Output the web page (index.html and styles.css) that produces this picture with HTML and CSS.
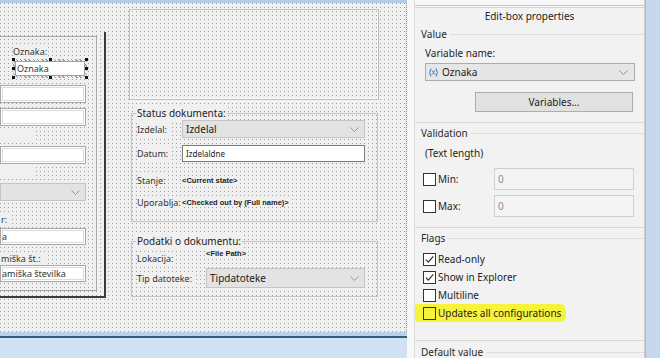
FILE: index.html
```html
<!DOCTYPE html>
<html lang="sl">
<head>
<meta charset="utf-8">
<title>Edit-box properties</title>
<link rel="stylesheet" href="styles.css">
</head>
<body>
<div class="app">
  <main class="designer">
    <div class="topbar"></div>
    <div class="canvas">
      <div class="form-frame">
        <div class="form-inner">
          <div class="lbl lbl-oznaka">Oznaka:</div>
          <div class="sel">
            <div class="tb-sel">Oznaka</div>
            <span class="h h1"></span><span class="h h2"></span><span class="h h3"></span>
            <span class="h h4"></span><span class="h h5"></span>
            <span class="h h6"></span><span class="h h7"></span><span class="h h8"></span>
          </div>
          <div class="tb tb1"></div>
          <div class="tb tb2"></div>
          <div class="ghost g1"></div>
          <div class="tb tb3"></div>
          <div class="ghost g2"></div>
          <div class="cb cb-left"><span></span><svg class="chev" width="9" height="5" viewBox="0 0 9 5"><path d="M0.5 0.5 L4.5 4.5 L8.5 0.5" fill="none" stroke="#9a9a9a" stroke-width="1"/></svg></div>
          <div class="lbl lbl-r">r:</div>
          <div class="tb tb4"><span class="tb-txt">a</span></div>
          <div class="lbl lbl-km">miška št.:</div>
          <div class="tb tb5"><span class="tb-txt">amiška številka</span></div>
        </div>
      </div>

      <div class="box-top"></div>

      <fieldset class="group status">
        <legend>Status dokumenta:</legend>
        <div class="frow r1">
          <span class="glbl">Izdelal:</span>
          <div class="cb"><span>Izdelal</span><svg class="chev" width="9" height="5" viewBox="0 0 9 5"><path d="M0.5 0.5 L4.5 4.5 L8.5 0.5" fill="none" stroke="#9a9a9a" stroke-width="1"/></svg></div>
        </div>
        <div class="frow r2">
          <span class="glbl">Datum:</span>
          <div class="tb-dark">Izdelaldne</div>
        </div>
        <div class="frow r3">
          <span class="glbl">Stanje:</span>
          <span class="ph">&lt;Current state&gt;</span>
        </div>
        <div class="frow r4">
          <span class="glbl">Uporablja:</span>
          <span class="ph">&lt;Checked out by (Full name)&gt;</span>
        </div>
      </fieldset>

      <fieldset class="group podatki">
        <legend>Podatki o dokumentu:</legend>
        <div class="prow p1">
          <span class="glbl lok">Lokacija:</span>
          <span class="ph fp">&lt;File Path&gt;</span>
        </div>
        <div class="prow p2">
          <span class="glbl">Tip datoteke:</span>
          <div class="cb cb-tip"><span>Tipdatoteke</span><svg class="chev" width="9" height="5" viewBox="0 0 9 5"><path d="M0.5 0.5 L4.5 4.5 L8.5 0.5" fill="none" stroke="#9a9a9a" stroke-width="1"/></svg></div>
        </div>
      </fieldset>
    </div>
    <div class="taskbar"></div>
  </main>

  <aside class="panel">
    <div class="panel-body">
      <div class="ptop"></div>
      <div class="ptitle">Edit-box properties</div>

      <section class="sec sec-value">
        <h3 class="sec-h">Value</h3>
        <div class="plabel">Variable name:</div>
        <div class="pcombo">
          <svg class="varicon" width="11" height="9" viewBox="0 0 11 9"><path d="M3 0.5 Q0.3 4.5 3 8.5 M8 0.5 Q10.7 4.5 8 8.5 M4 2.5 L7 6.5 M7 2.5 L4 6.5" fill="none" stroke="#2f7bd4" stroke-width="1"/></svg>
          <span class="pcombo-text">Oznaka</span>
          <svg class="pchev" width="9" height="5" viewBox="0 0 9 5"><path d="M0.5 0.5 L4.5 4.5 L8.5 0.5" fill="none" stroke="#8a8a8a" stroke-width="1"/></svg>
        </div>
        <button class="pbtn" type="button">Variables...</button>
      </section>

      <section class="sec sec-valid">
        <h3 class="sec-h">Validation</h3>
        <div class="plabel">(Text length)</div>
        <div class="vrow vmin">
          <label class="chk"><span class="box"></span><span>Min:</span></label>
          <div class="ptb">0</div>
        </div>
        <div class="vrow vmax">
          <label class="chk"><span class="box"></span><span>Max:</span></label>
          <div class="ptb">0</div>
        </div>
      </section>

      <section class="sec sec-flags">
        <h3 class="sec-h">Flags</h3>
        <div class="frow-list">
          <label class="chk flag"><span class="box"><svg width="11" height="11" viewBox="0 0 11 11"><path d="M1.8 5.6 L4.3 8.2 L9.3 2.4" fill="none" stroke="#333" stroke-width="1.2"/></svg></span><span>Read-only</span></label>
          <label class="chk flag"><span class="box"><svg width="11" height="11" viewBox="0 0 11 11"><path d="M1.8 5.6 L4.3 8.2 L9.3 2.4" fill="none" stroke="#333" stroke-width="1.2"/></svg></span><span>Show in Explorer</span></label>
          <label class="chk flag"><span class="box"></span><span>Multiline</span></label>
          <label class="chk flag hl"><span class="box"></span><span>Updates all configurations</span></label>
        </div>
      </section>

      <section class="sec sec-default">
        <h3 class="sec-h">Default value</h3>
      </section>
    </div>
  </aside>
  <div class="edge"></div>
</div>
</body>
</html>
```

FILE: styles.css
```css
* { box-sizing: border-box; }
html, body { margin: 0; padding: 0; }
body {
  width: 660px;
  height: 358px;
  overflow: hidden;
  font-family: "Noto Sans", "Open Sans", sans-serif;
  color: #1e1e1e;
  background: #d3e2f3;
}
.app {
  display: grid;
  grid-template-columns: 407px 238px 15px;
  height: 358px;
}

/* ---------- designer ---------- */
.designer { display: flex; flex-direction: column; overflow: hidden; }
.topbar { height: 3px; flex: none; background: #b3cbe6; }
.canvas {
  position: relative;
  flex: none;
  height: 329px;
  overflow: hidden;
  background-color: #f0f0f0;
  background-image: conic-gradient(at 1px 1px, transparent 75%, #9e9e9e 0);
  background-size: 4px 4px;
  border-right: 1px dotted #8e8e8e;
}
.taskbar {
  flex: 1;
  background: linear-gradient(#b9d1ea 0 4px, #2f5d7c 4px 6px, #d1e1f3 6px);
}

.form-frame {
  position: absolute;
  left: -12px;
  top: 29px;
  width: 118px;
  height: 266px;
  border-right: 2px solid #3c3c3c;
  border-bottom: 2px solid #3c3c3c;
  padding-top: 4px;
}
.form-inner {
  width: 109px;
  height: 255px;
  border: 1px solid #a8a8a8;
  border-left: 0;
  padding-left: 12px;
  font-size: 9px;
  color: #333;
}
.lbl { height: 12px; line-height: 12px; background: #f0f0f0; white-space: nowrap; }
.lbl-oznaka { margin: 9px 0 0 13px; width: 33px; }
.sel {
  position: relative;
  margin: 1px 0 0 13px;
  width: 74px;
  height: 19px;
  padding: 2px 2px;
  background: repeating-linear-gradient(45deg, #9c9c9c 0 1px, #f0f0f0 1px 3px);
}
.tb-sel {
  height: 15px;
  background: #fff;
  border: 1px solid #a0a0a0;
  line-height: 13px;
  padding-left: 1px;
  color: #333;
}
.h { position: absolute; width: 3px; height: 3px; background: #111; }
.h1 { left: -1px; top: -1px; } .h2 { left: 36px; top: -1px; } .h3 { left: 72px; top: -1px; }
.h4 { left: -1px; top: 8px; } .h5 { left: 72px; top: 8px; }
.h6 { left: -1px; top: 17px; } .h7 { left: 36px; top: 17px; } .h8 { left: 72px; top: 17px; }

.tb {
  width: 86px;
  height: 18px;
  background: #fff;
  border: 1px solid #a8a8a8;
  box-shadow: inset 0 0 0 1px #fff, inset 0 0 0 2px #dcdcdc;
  line-height: 15px;
  overflow: hidden;
  white-space: nowrap;
}
.tb-txt { padding-left: 1px; }
.tb1 { margin-top: 7px; }
.tb2 { margin-top: 5px; }
.ghost { width: 33px; background: #f0f0f0; }
.g1 { margin-top: 4px; height: 13px; }
.tb3 { margin-top: 3px; }
.g2 { margin-top: 3px; height: 12px; }
.cb {
  height: 18px;
  background: #e3e3e3;
  border: 1px solid #c4c4c4;
  display: flex;
  align-items: center;
  justify-content: space-between;
  padding: 0 5px 0 3px;
  font-size: 10px;
  color: #222;
}
.cb-left { margin-top: 4px; width: 86px; }
.lbl-r { margin-top: 13px; height: 13px; width: 9px; padding-left: 1px; }
.tb4 { margin-top: 1px; height: 17px; }
.lbl-km { margin-top: 8px; width: 48px; padding-left: 1px; }
.tb5 { height: 17px; }

.box-top {
  position: absolute;
  left: 129px;
  top: 6px;
  width: 250px;
  height: 91px;
  border: 1px solid #c0c0c0;
  box-shadow: inset 0 0 0 1px #fafafa;
}

.group {
  position: absolute;
  margin: 0;
  min-width: 0;
  border: 1px solid #c4c4c4;
  padding: 0 11px 0 5px;
  width: 247px;
}
.group legend {
  font-size: 10px;
  line-height: 14px;
  padding: 0 1px;
  margin-left: -1px;
  background: #f0f0f0;
  color: #222;
}
.status { left: 131px; top: 103px; height: 116px; }
.podatki { left: 131px; top: 231px; height: 63px; }
.glbl {
  font-size: 9px;
  line-height: 13px;
  color: #333;
  background: #f0f0f0;
  justify-self: start;
  padding-right: 2px;
}
.frow { display: grid; grid-template-columns: 45px 183px; align-items: center; }
.r1 { height: 18px; }
.r2 { height: 17px; margin-top: 7px; }
.r3 { height: 14px; margin-top: 11px; }
.r4 { height: 14px; margin-top: 8px; }
.tb-dark {
  height: 17px;
  background: #fff;
  border: 1px solid #7a7a7a;
  font-size: 8px;
  line-height: 15px;
  padding-left: 3px;
  color: #222;
}
.ph {
  font-family: "Liberation Sans", Arial, sans-serif;
  font-weight: bold;
  font-size: 7.5px;
  color: #222;
  background: #f0f0f0;
  justify-self: start;
}
.prow { display: grid; grid-template-columns: 69px 159px; }
.p1 { height: 18px; }
.p1 .lok { align-self: end; margin-bottom: 1px; }
.fp { align-self: start; margin-top: 1px; }
.p2 { height: 20px; margin-top: 2px; align-items: center; }
.cb-tip { height: 20px; }

/* ---------- panel ---------- */
.panel { background: #f7f7f7; padding-left: 7px; }
.panel-body {
  height: 358px;
  background: #f2f2f2;
  border-left: 1px solid #dfdfdf;
  border-right: 1px solid #cdcdcd;
  font-size: 10px;
  color: #1e1e1e;
}
.ptop {
  height: 8px;
  background: linear-gradient(#f7f7f7 0 5px, #c6c6c6 5px 6px, #f7f7f7 6px 7px, #d6d6d6 7px 8px);
}
.ptitle { height: 16px; line-height: 16px; text-align: center; color: #222; }
.sec { padding-left: 10px; }
.sec + .sec { border-top: 1px solid #d9d9d9; }
.sec-h {
  display: flex;
  align-items: center;
  margin: 3px 0 0 -4px;
  height: 14px;
  line-height: 14px;
  font-size: 10px;
  font-weight: normal;
  color: #2a2a2a;
}
.sec-h::after { content: ""; flex: 1; border-top: 1px solid #dedede; margin-left: 3px; }
.sec-value { padding-bottom: 10px; }
.plabel { margin-top: 5px; height: 14px; line-height: 14px; }
.pcombo {
  margin-top: 3px;
  width: 210px;
  height: 18px;
  background: #e6e6e6;
  border: 1px solid #adadad;
  display: flex;
  align-items: center;
  padding: 0 6px 0 2px;
}
.varicon { flex: none; }
.pcombo-text { margin-left: 3px; flex: 1; }
.pbtn {
  display: block;
  margin: 11px 0 0 50px;
  width: 158px;
  height: 20px;
  background: #e1e1e1;
  border: 1px solid #adadad;
  font: inherit;
  color: #222;
  padding: 0;
}
.sec-valid { padding-bottom: 10px; }
.sec-valid .sec-h { margin-top: 3px; }
.sec-valid .plabel { margin-top: 6px; }
.vrow { display: grid; grid-template-columns: 71px 140px; height: 22px; margin-left: -2px; }
.vmin { margin-top: 8px; }
.vmax { margin-top: 5px; }
.chk { display: flex; align-items: center; gap: 2px; }
.box {
  width: 13px;
  height: 13px;
  flex: none;
  background: #fff;
  border: 1px solid #333;
  display: flex;
  align-items: center;
  justify-content: center;
}
.ptb {
  background: #f4f4f4;
  border: 1px solid #cfcfcf;
  color: #8c8c8c;
  padding-left: 3px;
  line-height: 20px;
}
.sec-flags { padding-bottom: 18px; }
.frow-list { margin-top: 5px; margin-left: -2px; }
.flag { height: 18px; }
.hl {
  width: max-content;
  margin-left: -8px;
  padding: 0 5px 0 8px;
  background: #f6f33a;
  border-radius: 3px 6px 6px 3px;
}
.hl .box { background: #f6f33a; }
.sec-default .sec-h { margin-top: 4px; }

.edge { background: linear-gradient(90deg, #a9bfd8 0 1px, #c6d8ed 1px); }
```
